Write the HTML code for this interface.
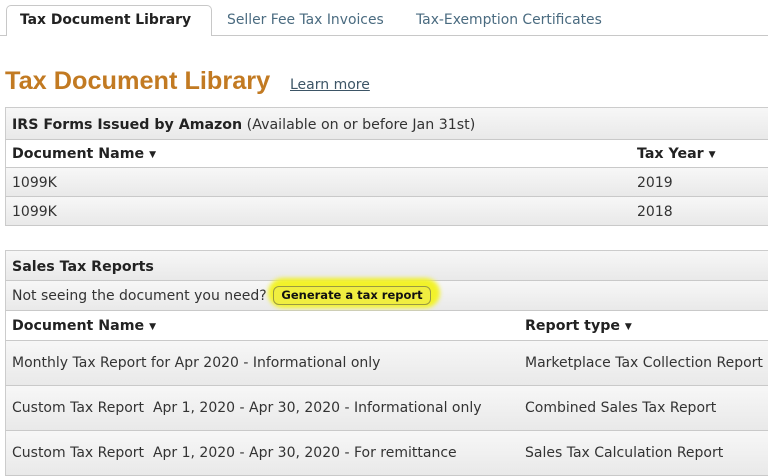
<!DOCTYPE html>
<html><head><style>
body{margin:0;width:768px;height:476px;overflow:hidden;background:#fff;font-family:"DejaVu Sans","Liberation Sans",sans-serif;font-size:14px;color:#333;position:relative}
.a{position:absolute;white-space:nowrap}
.tabline{position:absolute;left:0;top:35px;width:768px;height:1px;background:#c8c8c8}
.tab{position:absolute;left:6px;top:5px;width:204px;height:30px;border:1px solid #c8c8c8;border-bottom:none;border-radius:5px 5px 0 0;background:#fff;z-index:2}
.row{position:absolute;left:5px;width:770px;border-left:1px solid #ccc;box-sizing:border-box;border-bottom:1px solid #c9c9c9}
.g{background:linear-gradient(#f7f7f7,#e9e9e9)}
.w{background:#fff}
b{color:#222}
.car{font-size:9px;vertical-align:1px}
.h{font-size:14.2px}
</style></head><body>
<div class="tabline"></div>
<div class="tab"></div>
<div class="a" style="left:20px;top:12px;font-weight:bold;font-size:13.9px;color:#222;z-index:3">Tax Document Library</div>
<div class="a" style="left:227px;top:12px;font-size:13.9px;color:#4a6b80">Seller Fee Tax Invoices</div>
<div class="a" style="left:416px;top:12px;font-size:13.9px;color:#4a6b80">Tax-Exemption Certificates</div>
<div class="a" style="left:5px;top:67px;font-size:25.3px;font-weight:bold;color:#c27a22;font-family:'Liberation Sans',sans-serif">Tax Document Library</div>
<div class="a" style="left:290px;top:77px;font-size:14px;color:#3d5566;text-decoration:underline">Learn more</div>

<div class="row g" style="top:107px;height:33px;border-top:1px solid #ccc"><span class="a h" style="left:6px;top:9px"><b>IRS Forms Issued by Amazon</b> (Available on or before Jan 31st)</span></div>
<div class="row w" style="top:140px;height:28px"><span class="a h" style="left:6px;top:6px"><b>Document Name <span class="car">▼</span></b></span><span class="a h" style="left:631px;top:6px"><b>Tax Year <span class="car">▼</span></b></span></div>
<div class="row g" style="top:168px;height:29px"><span class="a" style="left:6px;top:7px">1099K</span><span class="a" style="left:631px;top:7px">2019</span></div>
<div class="row g" style="top:197px;height:29px"><span class="a" style="left:6px;top:7px">1099K</span><span class="a" style="left:631px;top:7px">2018</span></div>

<div class="row g" style="top:250px;height:31px;border-top:1px solid #ccc"><span class="a h" style="left:6px;top:8px"><b>Sales Tax Reports</b></span></div>
<div class="row g" style="top:281px;height:30px"><span class="a" style="left:6px;top:7px">Not seeing the document you need?</span>
<span class="a" style="left:262px;top:-3px;width:172px;height:30px;background:#f2f22a;border-radius:15px;filter:blur(2px)"></span>
<span class="a" style="left:267px;top:5px;width:156px;height:17px;border:1px solid #9a9a40;border-radius:6px;background:#f0ee40;font-size:11.5px;font-weight:bold;color:#111;text-align:center;line-height:17px">Generate a tax report</span></div>
<div class="row w" style="top:311px;height:30px"><span class="a h" style="left:6px;top:7px"><b>Document Name <span class="car">▼</span></b></span><span class="a h" style="left:519px;top:7px"><b>Report type <span class="car">▼</span></b></span></div>
<div class="row g" style="top:341px;height:45px"><span class="a" style="left:6px;top:14px">Monthly Tax Report for Apr 2020 - Informational only</span><span class="a" style="left:519px;top:14px">Marketplace Tax Collection Report</span></div>
<div class="row g" style="top:386px;height:45px"><span class="a" style="left:6px;top:14px">Custom Tax Report&nbsp; Apr 1, 2020 - Apr 30, 2020 - Informational only</span><span class="a" style="left:519px;top:14px">Combined Sales Tax Report</span></div>
<div class="row g" style="top:431px;height:45px"><span class="a" style="left:6px;top:14px">Custom Tax Report&nbsp; Apr 1, 2020 - Apr 30, 2020 - For remittance</span><span class="a" style="left:519px;top:14px">Sales Tax Calculation Report</span></div>
</body></html>
